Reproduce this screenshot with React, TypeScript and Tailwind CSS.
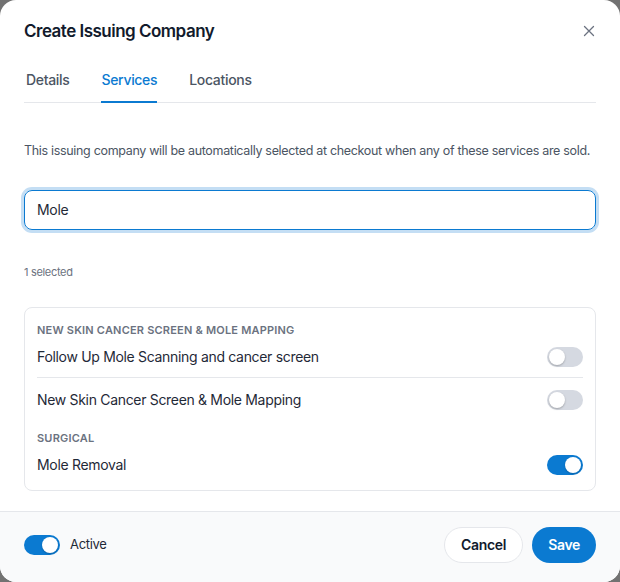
import React from "react";

function Toggle({ on }: { on: boolean }) {
  return (
    <span
      className={
        on
          ? "relative inline-flex h-5 w-9 shrink-0 items-center rounded-full bg-[#0b7ad1]"
          : "relative inline-flex h-5 w-9 shrink-0 items-center rounded-full bg-[#d5d9e1]"
      }
    >
      <span
        className={
          on
            ? "absolute left-[18px] h-4 w-4 rounded-full bg-white shadow-[0_1px_2px_rgba(0,0,0,0.2)]"
            : "absolute left-[2px] h-4 w-4 rounded-full bg-white shadow-[0_1px_2px_rgba(0,0,0,0.25)]"
        }
      />
    </span>
  );
}

export default function App() {
  return (
    <div
      className="min-h-[582px] w-[620px] bg-[#727272] tracking-[-0.02em]"
      style={{ fontFamily: "Inter, 'Noto Sans', sans-serif" }}
    >
      <div className="flex h-[582px] w-[620px] flex-col overflow-hidden rounded-2xl bg-white">
        <div className="flex-1 px-6">
          <div className="flex items-center justify-between pt-[19px]">
            <h1 className="text-[17px] font-semibold leading-6 tracking-[-0.03em] text-[#111a2c]">
              Create Issuing Company
            </h1>
            <svg width="12" height="12" viewBox="0 0 12 12" className="mr-[1px] text-[#6b7280]">
              <path d="M1.5 1.5 L10.5 10.5 M10.5 1.5 L1.5 10.5" stroke="currentColor" strokeWidth="1.3" strokeLinecap="round" />
            </svg>
          </div>

          <div className="mt-[27px] flex gap-8 border-b border-[#e5e7eb] pl-[2px]">
            <button className="-mb-px border-b-2 border-transparent pb-[11px] text-sm font-medium leading-5 text-[#4b5563]">
              Details
            </button>
            <button className="-mb-px border-b-2 border-[#0b7ad1] pb-[11px] text-sm font-medium leading-5 text-[#0b7ad1]">
              Services
            </button>
            <button className="-mb-px border-b-2 border-transparent pb-[11px] text-sm font-medium leading-5 text-[#4b5563]">
              Locations
            </button>
          </div>

          <p className="mt-[39px] whitespace-nowrap text-[12.5px] leading-[18px] text-[#4b5563]">
            This issuing company will be automatically selected at checkout when any of these services are sold.
          </p>

          <div className="mt-[30px] flex h-10 items-center rounded-lg border border-[#0b7ad1] px-3 text-sm text-[#1f2937] ring-[3px] ring-[#c4def4]">
            Mole
          </div>

          <div className="mt-[34px] text-[11px] leading-4 text-[#6b7280]">1 selected</div>

          <div className="mt-[27px] rounded-lg border border-[#e5e7eb] px-3 pb-[5px] pt-[15px]">
            <div className="text-[11px] font-semibold uppercase leading-[14px] tracking-[0.2px] text-[#6b7280]">
              New Skin Cancer Screen &amp; Mole Mapping
            </div>
            <div className="flex items-center justify-between border-b border-[#e5e7eb] py-[10px]">
              <span className="text-sm text-[#1f2937]">Follow Up Mole Scanning and cancer screen</span>
              <Toggle on={false} />
            </div>
            <div className="flex items-center justify-between pb-[10px] pt-[12px]">
              <span className="text-sm text-[#1f2937]">New Skin Cancer Screen &amp; Mole Mapping</span>
              <Toggle on={false} />
            </div>
            <div className="mt-[11px] text-[11px] font-semibold uppercase leading-[14px] tracking-[0.2px] text-[#6b7280]">
              Surgical
            </div>
            <div className="flex items-center justify-between py-[10px]">
              <span className="text-sm text-[#1f2937]">Mole Removal</span>
              <Toggle on={true} />
            </div>
          </div>
        </div>

        <div className="flex items-center justify-between border-t border-[#e5e7eb] bg-[#f9fafb] px-6 pb-[19px] pt-[15px]">
          <div className="flex items-center gap-[10px]">
            <Toggle on={true} />
            <span className="text-[13px] text-[#1f2937]">Active</span>
          </div>
          <div className="flex items-center gap-[9px]">
            <button className="h-9 rounded-full border border-[#e5e7eb] bg-white px-4 text-sm font-semibold text-[#111a2c]">
              Cancel
            </button>
            <button className="h-9 rounded-full bg-[#0b7ad1] px-4 text-sm font-semibold text-white">
              Save
            </button>
          </div>
        </div>
      </div>
    </div>
  );
}
